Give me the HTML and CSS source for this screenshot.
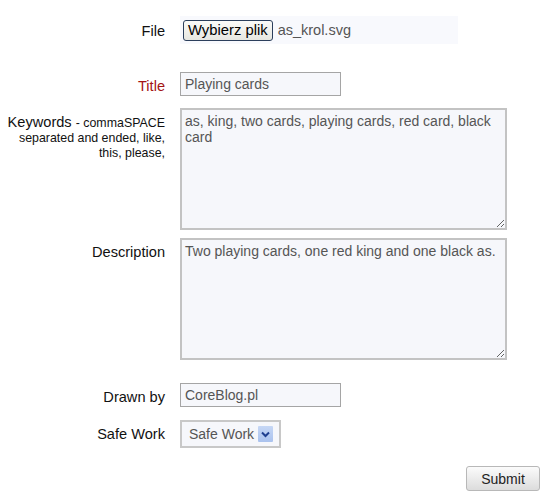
FILE: index.html
```html
<!DOCTYPE html>
<html lang="pl">
<head>
<meta charset="utf-8">
<title>Upload</title>
<link rel="stylesheet" href="styles.css">
</head>
<body>
<form class="form">
  <div class="row row-file">
    <label class="lbl">File</label>
    <div class="file-box">
      <button type="button" class="file-btn">Wybierz plik</button>
      <span class="file-name">as_krol.svg</span>
    </div>
  </div>
  <div class="row row-title">
    <label class="lbl lbl-red">Title</label>
    <input class="txt" type="text" value="Playing cards">
  </div>
  <div class="row row-kw">
    <label class="lbl lbl-kw">Keywords <small>- commaSPACE<br>separated and ended, like,<br>this, please,</small></label>
    <textarea class="area">as, king, two cards, playing cards, red card, black card</textarea>
  </div>
  <div class="row row-desc">
    <label class="lbl">Description</label>
    <textarea class="area">Two playing cards, one red king and one black as.</textarea>
  </div>
  <div class="row row-drawn">
    <label class="lbl">Drawn by</label>
    <input class="txt" type="text" value="CoreBlog.pl">
  </div>
  <div class="row row-safe">
    <label class="lbl">Safe Work</label>
    <div class="sel">
      <span class="sel-text">Safe Work</span>
      <span class="sel-arrow"><svg width="9" height="7" viewBox="0 0 9 7"><path d="M1 1.5 L4.5 5 L8 1.5" fill="none" stroke="#1f3f8f" stroke-width="2"/></svg></span>
    </div>
  </div>
  <div class="row-submit">
    <button type="button" class="submit">Submit</button>
  </div>
</form>
</body>
</html>
```
FILE: styles.css
```css
html, body {
  margin: 0;
  padding: 0;
  background: #ffffff;
}
body {
  font-family: "Liberation Sans", Arial, sans-serif;
  font-size: 14px;
  color: #000;
}
.form {
  padding: 16px 9px 0 0;
  display: flex;
  flex-direction: column;
}
.row {
  display: flex;
  align-items: flex-start;
  gap: 15px;
}
.lbl {
  width: 165px;
  flex: none;
  text-align: right;
  white-space: nowrap;
  font-size: 14.6px;
  line-height: 16px;
  padding-top: 6px;
  color: #111;
}
.lbl-red {
  color: #a41414;
}
.lbl-kw {
  line-height: 14px;
  padding-top: 7px;
}
.lbl-kw small {
  font-size: 12.4px;
}
.row-file .lbl {
  padding-top: 7px;
}
.row-title { margin-top: 28px; }
.row-kw { margin-top: 12px; }
.row-desc { margin-top: 8px; }
.row-drawn { margin-top: 23px; }
.row-safe { margin-top: 13px; }

.file-box {
  width: 278px;
  height: 28px;
  background: #f8f9fd;
  display: flex;
  align-items: center;
  padding-left: 3px;
  box-sizing: border-box;
  gap: 5px;
}
.file-btn {
  height: 21px;
  padding: 0 4px;
  border: 1px solid #2c3f5c;
  border-radius: 3px;
  background: linear-gradient(#fbfbf9, #e6e6e0);
  font-family: "Liberation Sans", Arial, sans-serif;
  font-size: 14.8px;
  color: #000;
  line-height: 18px;
}
.file-name {
  color: #555;
  font-size: 14.5px;
}
.txt {
  width: 161px;
  height: 24px;
  box-sizing: border-box;
  border: 1px solid #a5a5a5;
  background: #f6f7fb;
  padding: 0 4px;
  margin: 0;
  font-family: "Liberation Sans", Arial, sans-serif;
  font-size: 14px;
  color: #555;
}
.area {
  width: 327px;
  height: 122px;
  box-sizing: border-box;
  border: 2px solid #c3c3c3;
  background: #f6f7fb;
  padding: 3px 3px;
  margin: 0;
  font-family: "Liberation Sans", Arial, sans-serif;
  font-size: 14px;
  line-height: 16px;
  color: #555;
  resize: both;
}
.sel {
  width: 101px;
  height: 28px;
  box-sizing: border-box;
  border: 2px solid #c8c8c8;
  background: #f6f7fb;
  display: flex;
  align-items: center;
  padding-left: 7px;
  gap: 4px;
  color: #555;
}
.sel-arrow {
  width: 15px;
  height: 16px;
  background: linear-gradient(#c6d7f5, #aac2ee);
  border-radius: 1px;
  display: flex;
  align-items: center;
  justify-content: center;
}
.row-submit {
  display: flex;
  justify-content: flex-end;
  margin-top: 18px;
}
.submit {
  width: 74px;
  height: 25px;
  border: 1px solid #b8b8b8;
  border-radius: 3px;
  background: linear-gradient(#fbfbfb, #dcdcdc);
  font-family: "Liberation Sans", Arial, sans-serif;
  font-size: 14px;
  color: #222;
  padding: 0;
}
```
